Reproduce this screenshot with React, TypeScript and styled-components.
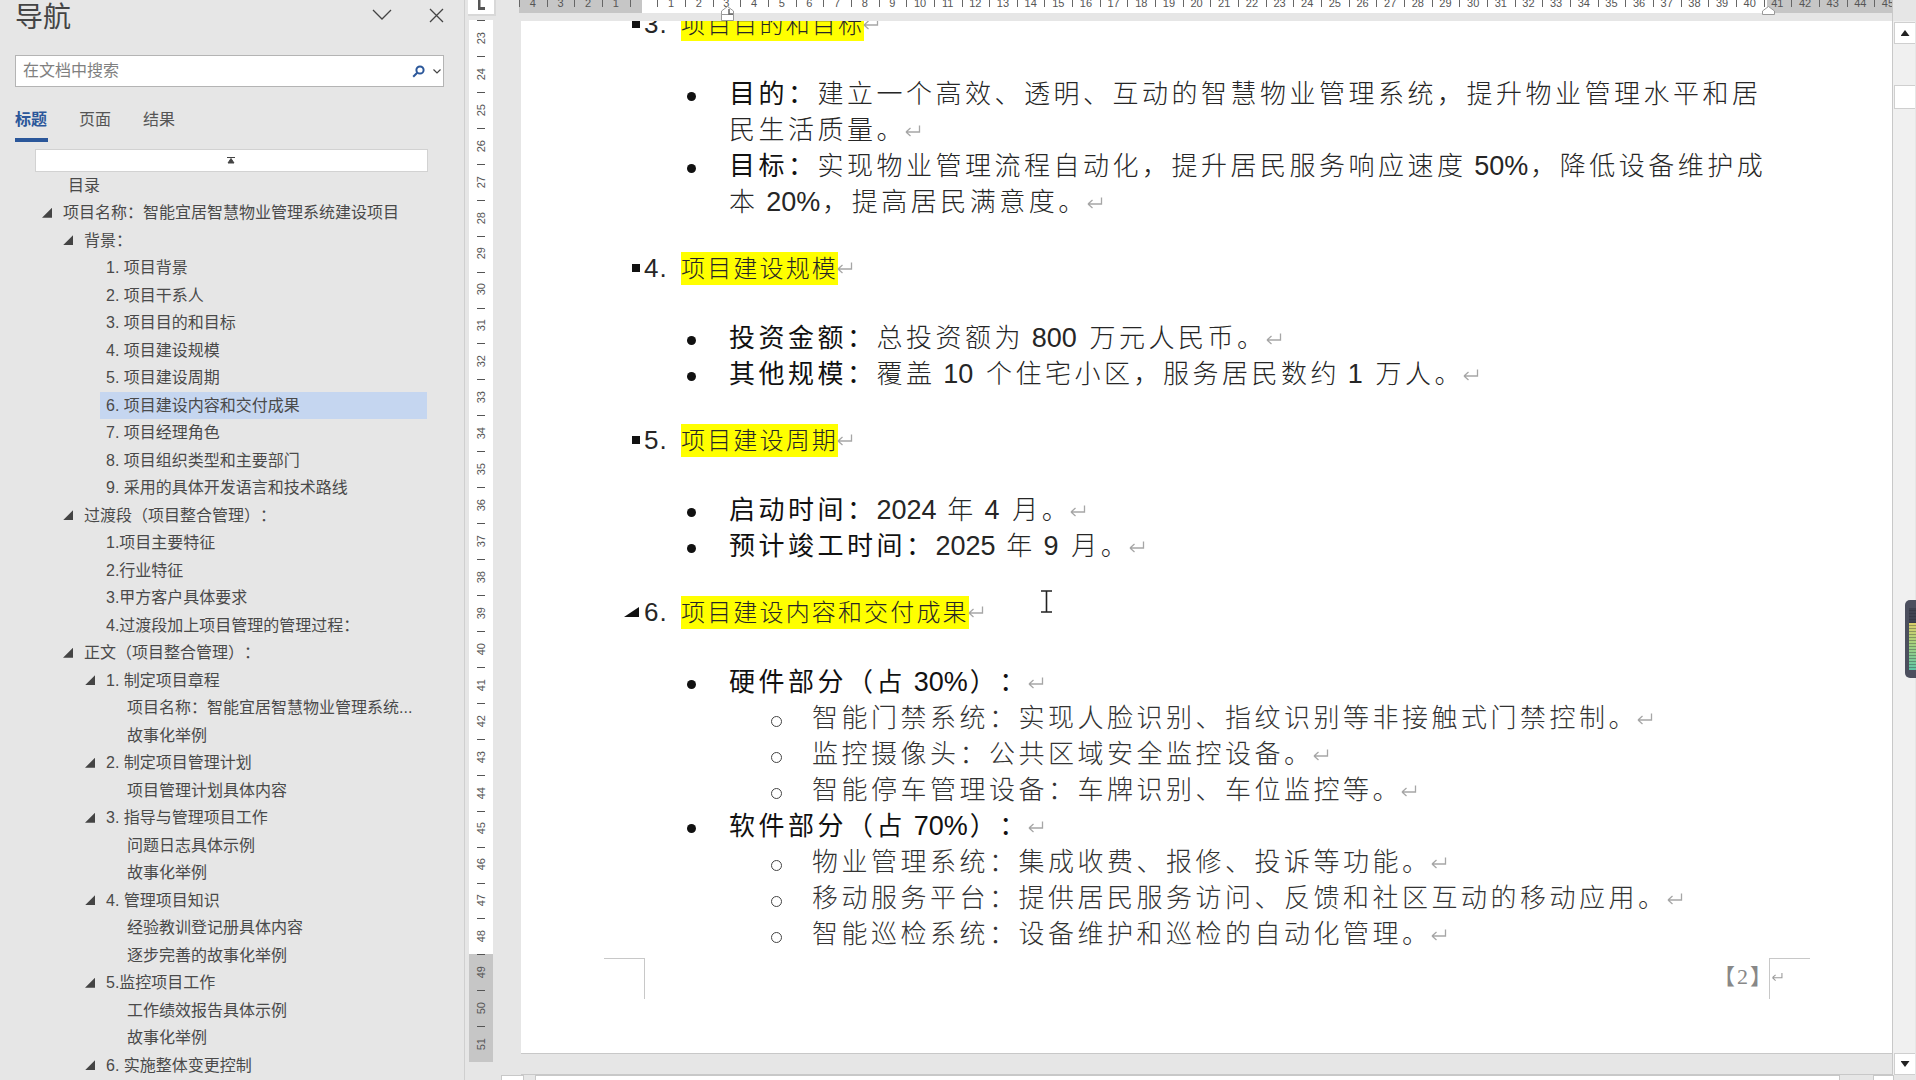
import React from 'react';
import styled, { createGlobalStyle } from 'styled-components';

const CJK = `"Liberation Sans", "Noto Sans CJK SC", sans-serif`;

type NavRow = { text: string; left: number; open?: boolean; active?: boolean };

// heading tree of the navigation pane, left = x of the label
const NAV_ROWS: NavRow[] = [
  { text: '目录', left: 68 },
  { text: '项目名称：智能宜居智慧物业管理系统建设项目', left: 63, open: true },
  { text: '背景：', left: 84, open: true },
  { text: '1. 项目背景', left: 106 },
  { text: '2. 项目干系人', left: 106 },
  { text: '3. 项目目的和目标', left: 106 },
  { text: '4. 项目建设规模', left: 106 },
  { text: '5. 项目建设周期', left: 106 },
  { text: '6. 项目建设内容和交付成果', left: 106, active: true },
  { text: '7. 项目经理角色', left: 106 },
  { text: '8. 项目组织类型和主要部门', left: 106 },
  { text: '9. 采用的具体开发语言和技术路线', left: 106 },
  { text: '过渡段（项目整合管理）：', left: 84, open: true },
  { text: '1.项目主要特征', left: 106 },
  { text: '2.行业特征', left: 106 },
  { text: '3.甲方客户具体要求', left: 106 },
  { text: '4.过渡段加上项目管理的管理过程：', left: 106 },
  { text: '正文（项目整合管理）：', left: 84, open: true },
  { text: '1. 制定项目章程', left: 106, open: true },
  { text: '项目名称：智能宜居智慧物业管理系统...', left: 127 },
  { text: '故事化举例', left: 127 },
  { text: '2. 制定项目管理计划', left: 106, open: true },
  { text: '项目管理计划具体内容', left: 127 },
  { text: '3. 指导与管理项目工作', left: 106, open: true },
  { text: '问题日志具体示例', left: 127 },
  { text: '故事化举例', left: 127 },
  { text: '4. 管理项目知识', left: 106, open: true },
  { text: '经验教训登记册具体内容', left: 127 },
  { text: '逐步完善的故事化举例', left: 127 },
  { text: '5.监控项目工作', left: 106, open: true },
  { text: '工作绩效报告具体示例', left: 127 },
  { text: '故事化举例', left: 127 },
  { text: '6. 实施整体变更控制', left: 106, open: true },
];

type DocItem = { label?: string; text: string; subs?: string[] };
type DocSection = { num: string; title: string; open?: boolean; items: DocItem[] };

const SECTIONS: DocSection[] = [
  {
    num: '3.',
    title: '项目目的和目标',
    items: [
      { label: '目的：', text: '建立一个高效、透明、互动的智慧物业管理系统，提升物业管理水平和居民生活质量。' },
      { label: '目标：', text: '实现物业管理流程自动化，提升居民服务响应速度 50%，降低设备维护成本 20%，提高居民满意度。' },
    ],
  },
  {
    num: '4.',
    title: '项目建设规模',
    items: [
      { label: '投资金额：', text: '总投资额为 800 万元人民币。' },
      { label: '其他规模：', text: '覆盖 10 个住宅小区，服务居民数约 1 万人。' },
    ],
  },
  {
    num: '5.',
    title: '项目建设周期',
    items: [
      { label: '启动时间：', text: '2024 年 4 月。' },
      { label: '预计竣工时间：', text: '2025 年 9 月。' },
    ],
  },
  {
    num: '6.',
    title: '项目建设内容和交付成果',
    open: true,
    items: [
      {
        label: '硬件部分（占 30%）：',
        text: '',
        subs: [
          '智能门禁系统：实现人脸识别、指纹识别等非接触式门禁控制。',
          '监控摄像头：公共区域安全监控设备。',
          '智能停车管理设备：车牌识别、车位监控等。',
        ],
      },
      {
        label: '软件部分（占 70%）：',
        text: '',
        subs: [
          '物业管理系统：集成收费、报修、投诉等功能。',
          '移动服务平台：提供居民服务访问、反馈和社区互动的移动应用。',
          '智能巡检系统：设备维护和巡检的自动化管理。',
        ],
      },
    ],
  },
];

const H_RULER = Array.from({ length: 50 }, (_, i) => i - 4);
const V_RULER = Array.from({ length: 29 }, (_, i) => i + 23);

function ParaMark() {
  return (
    <ParaSvg viewBox="0 0 17 14" width="17" height="14">
      <path d="M15.5 1.5V8H2M2 8l4.5-4M2 8l4.5 4" fill="none" stroke="#a6a6a6" strokeWidth="1.3" />
    </ParaSvg>
  );
}

// digits run tight, the Chinese around them stays spaced
function Spaced({ text }: { text: string }) {
  const parts = text.split(/([0-9%]+)/);
  return (
    <>
      {parts.map((part, i) =>
        i % 2 ? (
          <Latin key={i} $afterSpace={parts[i - 1].endsWith(' ')}>
            {part}
          </Latin>
        ) : (
          part
        ),
      )}
    </>
  );
}

export default function App() {
  return (
    <>
      <GlobalStyle />
      <Window>
        <NavPane>
          <NavHeader>
            <NavTitle>导航</NavTitle>
            <svg width="20" height="12" viewBox="0 0 20 12">
              <path d="M1 1l9 9 9-9" fill="none" stroke="#444" strokeWidth="1.3" />
            </svg>
            <CloseIcon width="15" height="15" viewBox="0 0 15 15">
              <path d="M1 1l13 13M14 1L1 14" fill="none" stroke="#444" strokeWidth="1.3" />
            </CloseIcon>
          </NavHeader>
          <SearchBox>
            <SearchHint>在文档中搜索</SearchHint>
            <svg width="13" height="13" viewBox="0 0 13 13">
              <circle cx="8" cy="5" r="3.6" fill="none" stroke="#2b579a" strokeWidth="2" />
              <path d="M5.2 7.8L1.2 11.8" stroke="#2b579a" strokeWidth="2" />
            </svg>
            <SearchCaret width="8" height="5" viewBox="0 0 8 5">
              <path d="M.5.5L4 4 7.5.5" fill="none" stroke="#444" strokeWidth="1.2" />
            </SearchCaret>
          </SearchBox>
          <NavTabs>
            <NavTab $active>标题</NavTab>
            <NavTab>页面</NavTab>
            <NavTab>结果</NavTab>
          </NavTabs>
          <TreeScrollUp>
            <svg width="8" height="7" viewBox="0 0 8 7">
              <path d="M0 .5h8M4 1.5L7 6H1z" stroke="#444" strokeWidth="1" fill="#444" />
            </svg>
          </TreeScrollUp>
          <Tree>
            {NAV_ROWS.map((row, i) => (
              <TreeRow key={i} $left={row.left}>
                <TreeSlot>{row.open && <TreeArrow />}</TreeSlot>
                <TreeLabel $active={row.active}>{row.text}</TreeLabel>
              </TreeRow>
            ))}
          </Tree>
        </NavPane>

        <Workspace>
          <Gutter>
            <RulerCorner>
              <svg width="7" height="10" viewBox="0 0 7 10">
                <path d="M0 0h2.5v7H7v3H0z" fill="#555" />
              </svg>
            </RulerCorner>
          </Gutter>

          <TopRulerWrap>
            <TopRuler>
              {H_RULER.map(n => (
                <HCell key={n}>{n !== 0 && Math.abs(n)}</HCell>
              ))}
            </TopRuler>
            <IndentMarker $left={202} width="13" height="15" viewBox="0 0 13 15">
              <path d="M.5 8.5V5L6.5.5 12.5 5v3.5zM.5 8.5h12v6H.5z" fill="#fff" stroke="#999" />
              <path d="M8 3v5h4" fill="none" stroke="#666" strokeWidth="1.5" />
            </IndentMarker>
            <IndentMarker $left={1243} width="13" height="9" viewBox="0 0 13 9">
              <path d="M.5 8.5V5L6.5.5 12.5 5v3.5z" fill="#fff" stroke="#999" />
            </IndentMarker>
          </TopRulerWrap>

          <SideRuler>
            {V_RULER.map(n => (
              <VCell key={n} $margin={n > 48}>
                <VNumber>{n}</VNumber>
              </VCell>
            ))}
          </SideRuler>

          <Page>
            {SECTIONS.map((section, i) => (
              <Section key={section.num} $first={i === 0}>
                <SectionHead>
                  <MarkerSlot>{section.open ? <OpenMarker /> : <ClosedMarker />}</MarkerSlot>
                  <SectionNum>{section.num}</SectionNum>
                  <Highlight>{section.title}</Highlight>
                  <ParaMark />
                </SectionHead>
                {section.items.map((item, j) => (
                  <React.Fragment key={j}>
                    <Item>
                      <Dot />
                      <ItemText>
                        <ItemLabel>
                          <Spaced text={item.label ?? ''} />
                        </ItemLabel>
                        <Spaced text={item.text} />
                        <ParaMark />
                      </ItemText>
                    </Item>
                    {item.subs?.map(sub => (
                      <SubItem key={sub}>
                        <Ring />
                        <ItemText>
                          {sub}
                          <ParaMark />
                        </ItemText>
                      </SubItem>
                    ))}
                  </React.Fragment>
                ))}
              </Section>
            ))}
            <PageFooter>
              <CropMark $side="left" />
              <FooterRight>
                <PageNumber>【2】</PageNumber>
                <CropMark $side="right">
                  <svg viewBox="0 0 17 14" width="12" height="10">
                    <path d="M15.5 1.5V8H2M2 8l4.5-4M2 8l4.5 4" fill="none" stroke="#999" strokeWidth="1.5" />
                  </svg>
                </CropMark>
              </FooterRight>
            </PageFooter>
            <TextCursor width="13" height="23" viewBox="0 0 13 23">
              <path d="M1 1h11M6.5 1v21M1 22h11" fill="none" stroke="#222" strokeWidth="1.6" />
            </TextCursor>
          </Page>

          <VScroll>
            <ScrollButton>
              <ScrollArrow $up />
            </ScrollButton>
            <ScrollThumb />
            <ScrollButton $bottom>
              <ScrollArrow />
            </ScrollButton>
          </VScroll>

          <BottomStrip />
          <HScroll>
            <HBox $width={23} />
            <HThumb />
            <HBox $width={21} />
          </HScroll>
        </Workspace>

        <MeterWidget />
      </Window>
    </>
  );
}

const GlobalStyle = createGlobalStyle`
  html, body {
    margin: 0;
    padding: 0;
    background: #e6e6e6;
    overflow: hidden;
    text-spacing-trim: space-all;
  }
`;

const Window = styled.div`
  position: relative;
  width: 1916px;
  height: 1080px;
  display: flex;
  overflow: hidden;
  font-family: ${CJK};
  background: #e6e6e6;
`;

/* navigation pane */
const NavPane = styled.aside`
  width: 465px;
  height: 1080px;
  flex-shrink: 0;
  box-sizing: border-box;
  padding: 0 20px 0 15px;
  border-right: 1px solid #cfcfcf;
  color: #444;
`;

const NavHeader = styled.div`
  height: 34px;
  display: flex;
  align-items: center;

  svg {
    margin-top: -4px;
  }
`;

const NavTitle = styled.h1`
  flex: 1;
  margin: 0;
  padding-top: 2px;
  font-size: 28px;
  font-weight: 400;
  line-height: 32px;
  color: #444;
`;

const CloseIcon = styled.svg`
  margin-left: 37px;
`;

const SearchBox = styled.div`
  height: 32px;
  margin-top: 21px;
  box-sizing: border-box;
  display: flex;
  align-items: center;
  padding: 0 2px 0 7px;
  background: #fff;
  border: 1px solid #b4b4b4;
`;

const SearchHint = styled.span`
  flex: 1;
  margin-top: -4px;
  font-size: 16px;
  color: #808080;
`;

const SearchCaret = styled.svg`
  margin-left: 8px;
`;

const NavTabs = styled.div`
  height: 38px;
  margin-top: 17px;
  display: flex;
  gap: 31px;
`;

const NavTab = styled.div<{ $active?: boolean }>`
  box-sizing: border-box;
  height: 38px;
  width: 33px;
  padding-top: 3px;
  font-size: 16px;
  line-height: 26px;
  font-weight: ${p => (p.$active ? 700 : 400)};
  color: ${p => (p.$active ? '#2b579a' : '#555')};
  border-bottom: 4px solid ${p => (p.$active ? '#2b579a' : 'transparent')};
`;

const TreeScrollUp = styled.div`
  width: 393px;
  height: 23px;
  margin: 7px 0 0 20px;
  padding-right: 2px;
  box-sizing: border-box;
  display: flex;
  align-items: center;
  justify-content: center;
  background: #fff;
  border: 1px solid #d2d2d2;
`;

const Tree = styled.ul`
  list-style: none;
  margin: -0.5px 0 0 -15px;
  padding: 0;
`;

const TreeRow = styled.li<{ $left: number }>`
  height: 27.5px;
  display: flex;
  align-items: center;
  margin-left: ${p => p.$left - 21}px;
`;

const TreeSlot = styled.span`
  width: 21px;
  flex-shrink: 0;
  display: flex;
  align-items: center;
`;

const TreeArrow = styled.i`
  width: 10px;
  height: 10px;
  background: #444;
  clip-path: polygon(100% 0, 100% 100%, 0 100%);
`;

const TreeLabel = styled.span<{ $active?: boolean }>`
  flex: 1;
  margin: 0 17px 0 -6px;
  padding-left: 6px;
  font-size: 16px;
  line-height: 27.5px;
  white-space: nowrap;
  color: #4a4a4a;
  background: ${p => (p.$active ? '#c5d6f0' : 'transparent')};
`;

/* document area */
const Workspace = styled.main`
  flex: 1;
  display: grid;
  grid-template-columns: 56px 1371px 23px;
  grid-template-rows: 21px 1032px 22px 5px;
`;

const Gutter = styled.div`
  grid-column: 1;
  grid-row: 1;
  padding-left: 3px;
`;

const RulerCorner = styled.div`
  width: 26px;
  height: 14px;
  display: flex;
  justify-content: center;
  align-items: flex-start;
  background: #fff;
  border: solid #d8d8d8;
  border-width: 0 2px 2px 0;
`;

const TopRulerWrap = styled.div`
  grid-column: 2;
  grid-row: 1;
  position: relative;
  margin-left: -2px;
  z-index: 2;
`;

const TopRuler = styled.div`
  height: 13px;
  display: flex;
  overflow: hidden;
  background: linear-gradient(to right, #c6c6c6 123px, #fff 123px, #fff 1248px, #c6c6c6 1248px);
`;

const HCell = styled.div`
  width: 27.66px;
  flex-shrink: 0;
  text-align: center;
  font-family: "Liberation Sans", sans-serif;
  font-size: 11px;
  line-height: 7px;
  color: #555;
  background: linear-gradient(#666, #666) left top / 1px 7px no-repeat;
`;

const IndentMarker = styled.svg<{ $left: number }>`
  position: absolute;
  top: 6px;
  left: ${p => p.$left}px;
`;

const SideRuler = styled.div`
  grid-column: 1;
  grid-row: 2 / 4;
  width: 24px;
  height: 1043px;
  margin-left: 4px;
  margin-top: -1px;
  overflow: hidden;
`;

const VCell = styled.div<{ $margin?: boolean }>`
  height: 35.95px;
  display: flex;
  align-items: center;
  justify-content: center;
  background: linear-gradient(#555, #555) center top / 8px 1px no-repeat ${p => (p.$margin ? '#c6c6c6' : '#fff')};
`;

const VNumber = styled.span`
  writing-mode: vertical-rl;
  transform: rotate(180deg);
  font-family: "Liberation Sans", sans-serif;
  font-size: 11px;
  color: #555;
`;

const Page = styled.section`
  grid-column: 2;
  grid-row: 2;
  position: relative;
  overflow: hidden;
  background: #fff;
  color: #262626;
`;

const Section = styled.div<{ $first?: boolean }>`
  margin-top: ${p => (p.$first ? '-15px' : '30px')};
`;

const SectionHead = styled.div`
  height: 36px;
  margin: 0 0 34px 103px;
  display: flex;
  align-items: center;
  font-size: 25px;
`;

const MarkerSlot = styled.span`
  width: 20px;
  display: flex;
  justify-content: flex-end;
  align-items: center;
`;

const ClosedMarker = styled.i`
  width: 8px;
  height: 8px;
  margin-right: 4px;
  background: #111;
`;

const OpenMarker = styled.i`
  width: 15px;
  height: 10px;
  margin-right: 5px;
  background: #111;
  clip-path: polygon(100% 0, 100% 100%, 0 100%);
`;

const SectionNum = styled.span`
  width: 37px;
  font-size: 26px;
  letter-spacing: 1px;
`;

const Highlight = styled.span`
  height: 33px;
  line-height: 33px;
  font-size: 24px;
  font-weight: 300;
  letter-spacing: 2.16px;
  white-space: nowrap;
  background: #ffff00;
`;

const Item = styled.div`
  display: flex;
  margin-left: 148px;
  width: 1105px;
  font-size: 26px;
  font-weight: 300;
  line-height: 36px;
  letter-spacing: 3.5px;
`;

const SubItem = styled(Item)`
  margin-left: 238px;
  width: 1000px;
  color: #333;
`;

const Dot = styled.i`
  width: 9px;
  height: 9px;
  margin: 16px 33px 0 18px;
  flex-shrink: 0;
  border-radius: 50%;
  background: #111;
`;

const Ring = styled.i`
  width: 11px;
  height: 11px;
  margin: 16px 30px 0 12px;
  flex-shrink: 0;
  box-sizing: border-box;
  border-radius: 50%;
  border: 1.5px solid #444;
`;

const ItemText = styled.div`
  flex: 1;
`;

const ItemLabel = styled.span`
  color: #111;
  font-weight: 400;
`;

const Latin = styled.span<{ $afterSpace?: boolean }>`
  font-size: 27px;
  letter-spacing: 0;
  font-weight: 400;
  ${p => p.$afterSpace && 'margin: 0 2px 0 -3px;'}
`;

const ParaSvg = styled.svg`
  vertical-align: 1px;
  margin-left: -2px;
`;

const PageFooter = styled.div`
  display: flex;
  justify-content: space-between;
  margin: 6px 82px 0 83px;
`;

const FooterRight = styled.div`
  display: flex;
  align-items: flex-start;
`;

const CropMark = styled.div<{ $side: 'left' | 'right' }>`
  width: 41px;
  height: 41px;
  box-sizing: border-box;
  border-top: 1px solid #c8c8c8;
  padding: 13px 0 0 1px;
  ${p => (p.$side === 'left' ? 'border-right: 1px solid #c8c8c8;' : 'border-left: 1px solid #c8c8c8;')}

  svg {
    display: block;
  }
`;

const PageNumber = styled.span`
  width: 56px;
  margin-top: 5px;
  font-family: "Liberation Serif", "Noto Sans CJK SC", serif;
  font-size: 22px;
  line-height: 28px;
  letter-spacing: 2px;
  white-space: nowrap;
  color: #888;
`;

const TextCursor = styled.svg`
  position: absolute;
  left: 519px;
  top: 569px;
`;

/* scrollbars */
const VScroll = styled.div`
  grid-column: 3;
  grid-row: 1 / 4;
  display: flex;
  flex-direction: column;
  align-items: flex-end;
  padding-top: 22px;
  background: linear-gradient(#e6e6e6 21px, #f0f0f0 21px);
  border-left: 1px solid #c8c8c8;
`;

const ScrollButton = styled.div<{ $bottom?: boolean }>`
  width: 21px;
  height: 22px;
  box-sizing: border-box;
  display: flex;
  align-items: center;
  justify-content: center;
  background: #fff;
  border: 1px solid #cfcfcf;
  border-right: 0;
  ${p => p.$bottom && 'margin-top: auto;'}
`;

const ScrollArrow = styled.i<{ $up?: boolean }>`
  width: 9px;
  height: 6px;
  background: #222;
  clip-path: ${p => (p.$up ? 'polygon(50% 0, 100% 100%, 0 100%)' : 'polygon(0 0, 100% 0, 50% 100%)')};
`;

const ScrollThumb = styled.div`
  width: 21px;
  height: 24px;
  margin-top: 41px;
  box-sizing: border-box;
  background: #fff;
  border: 1px solid #cfcfcf;
  border-right: 0;
`;

const BottomStrip = styled.div`
  grid-column: 2;
  grid-row: 3;
  background: #e6e6e6;
  border-top: 1px solid #c8c8c8;
  border-bottom: 1px solid #c8c8c8;
`;

const HScroll = styled.div`
  grid-column: 1 / 3;
  grid-row: 4;
  display: flex;
  padding-left: 36px;
`;

const HBox = styled.div<{ $width: number }>`
  width: ${p => p.$width}px;
  flex-shrink: 0;
  box-sizing: border-box;
  background: #fff;
  border: 1px solid #c8c8c8;
  border-bottom: 0;
`;

const HThumb = styled.div`
  width: 1303px;
  margin: 0 33px 0 11px;
  flex-shrink: 0;
  background: #fff;
  border: 1px solid #c8c8c8;
  border-bottom: 0;
`;

/* floating level meter at the window edge */
const MeterWidget = styled.div`
  position: absolute;
  right: 0;
  top: 600px;
  width: 11px;
  height: 78px;
  box-sizing: border-box;
  padding: 8px 0 8px 4px;
  border-radius: 5px 0 0 5px;
  background: #4c4f5e;

  &::after {
    content: '';
    display: block;
    height: 100%;
    background:
      repeating-linear-gradient(transparent 0 2px, rgba(40, 40, 50, 0.35) 2px 3px),
      linear-gradient(#3f4250 0 25%, #d9cf6a 25%, #a9d27c 55%, #5fc6a6 100%);
  }
`;
